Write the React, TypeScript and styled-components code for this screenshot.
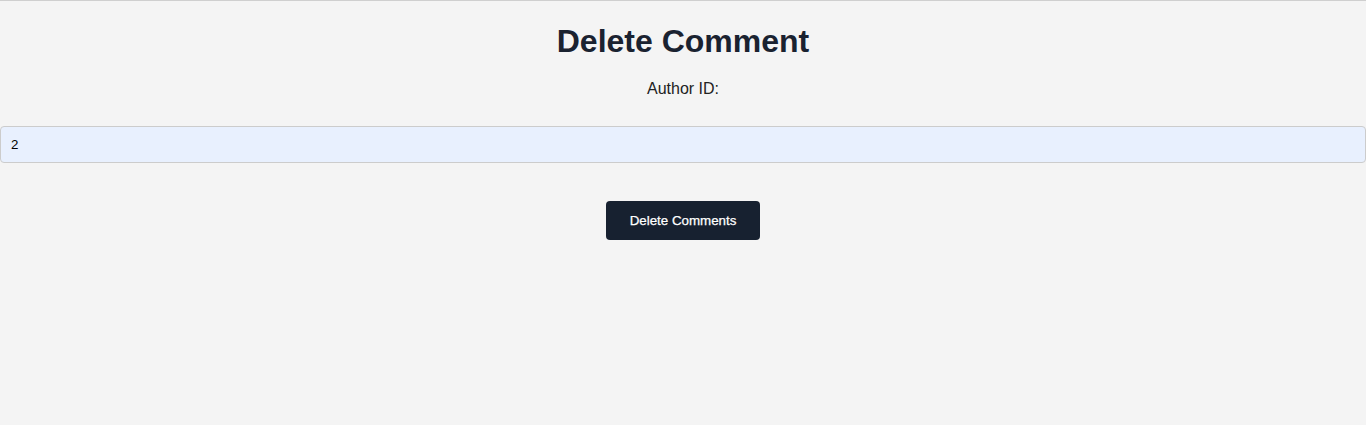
import React, { useState } from 'react';
import styled, { createGlobalStyle } from 'styled-components';

const GlobalStyle = createGlobalStyle`
  html, body {
    margin: 0;
    padding: 0;
    background: #f4f4f4;
    font-family: "Liberation Sans", Arial, sans-serif;
  }
`;

const Page = styled.div`
  min-height: 425px;
  box-sizing: border-box;
  border-top: 1px solid #cfcfcf;
  background: #f4f4f4;
  display: flex;
  flex-direction: column;
  align-items: center;
  padding-top: 22px;
`;

const Title = styled.h1`
  margin: 0;
  font-size: 32px;
  font-weight: 700;
  color: #1a2230;
`;

const Form = styled.form`
  width: 100%;
  display: flex;
  flex-direction: column;
  align-items: center;
`;

const Label = styled.label`
  margin-top: 20px;
  font-size: 16px;
  color: #222;
`;

const Input = styled.input`
  margin-top: 28px;
  width: 100%;
  height: 37px;
  box-sizing: border-box;
  padding: 0 10px;
  border: 1px solid #cccccc;
  border-radius: 4px;
  background: #e8f0fe;
  font-family: "Liberation Sans", Arial, sans-serif;
  font-size: 13.33px;
  color: #000;
  outline: none;
`;

const Button = styled.button`
  margin-top: 38px;
  width: 154px;
  height: 39px;
  border: none;
  border-radius: 4px;
  background: #172130;
  color: #fff;
  font-family: "Liberation Sans", Arial, sans-serif;
  font-size: 13.33px;
  font-weight: 400;
  -webkit-text-stroke: 0.25px #fff;
  cursor: pointer;
`;

export default function App() {
  const [authorId, setAuthorId] = useState('2');

  return (
    <>
      <GlobalStyle />
      <Page>
        <Title>Delete Comment</Title>
        <Form onSubmit={e => e.preventDefault()}>
          <Label htmlFor="author-id">Author ID:</Label>
          <Input
            id="author-id"
            value={authorId}
            onChange={e => setAuthorId(e.target.value)}
          />
          <Button type="submit">Delete Comments</Button>
        </Form>
      </Page>
    </>
  );
}
